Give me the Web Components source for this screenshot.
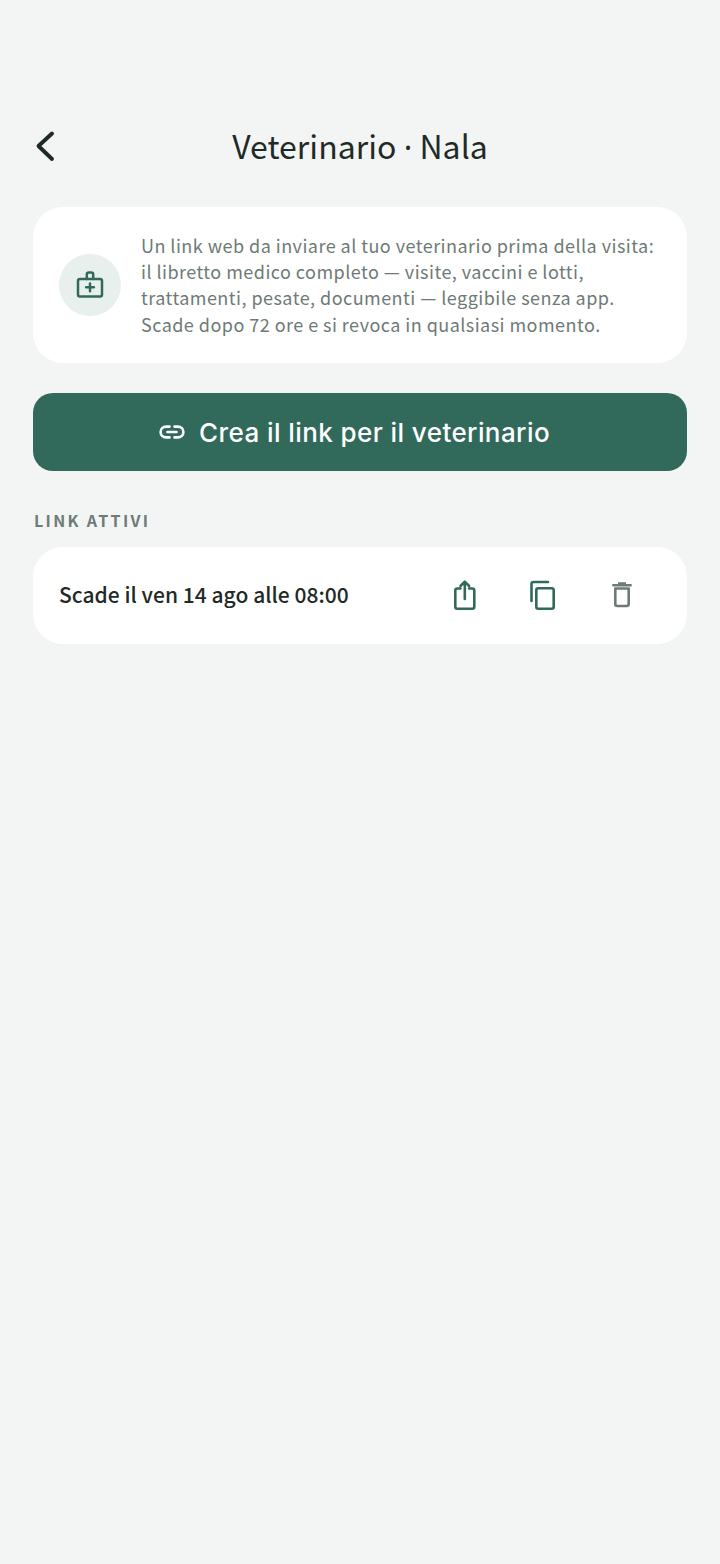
<!DOCTYPE html>
<html lang="it"><head><meta charset="utf-8"><style>
html,body{margin:0;background:#f3f5f4}
body{font-family:"Noto Sans CJK SC","Noto Sans",sans-serif;width:720px;height:1564px;overflow:hidden}
</style></head><body>
<vet-screen></vet-screen>
<script>
const def=(n,html)=>customElements.define(n,class extends HTMLElement{constructor(){super();this.attachShadow({mode:'open'}).innerHTML=html}});
def('vet-header',`<style>
:host{display:grid;grid-template-columns:1fr auto 1fr;align-items:center;height:60px;color:#1f2a27}
svg{display:block;margin-left:32px;margin-bottom:2px}
h1{margin:0;font-weight:400;font-size:32px;line-height:56px;height:60px;white-space:nowrap;letter-spacing:.03px}
.d{font-family:"Noto Sans",sans-serif}
</style><svg width="26" height="36" viewBox="0 0 26 36" fill="none" stroke="#1f2a27" stroke-width="3.900" stroke-linecap="round" stroke-linejoin="round"><path d="M20 5.500 6.500 18 20 31"/></svg><h1>Veterinario <span class="d">·</span> Nala</h1><span></span>`);
def('info-card',`<style>
:host{display:flex;align-items:center;gap:20px;background:#fff;border-radius:30px;padding:24px 26px;height:156px;box-sizing:border-box}
.c{width:62px;height:62px;border-radius:50%;background:#e7f0ed;display:flex;align-items:center;justify-content:center;flex:none}
svg{display:block}
p{margin:0;padding-bottom:1.400px;font-size:18px;line-height:26.300px;color:#6e7a76;letter-spacing:.46px;white-space:nowrap}
</style><div class="c"><svg width="30" height="30" viewBox="0 0 30 30" fill="none" stroke="#316a5a" stroke-width="2.500" stroke-linejoin="round" stroke-linecap="round"><rect x="3" y="9" width="24" height="17.400" rx="2"/><path d="M11.800 9V4.500a2 2 0 0 1 2-2h2.400a2 2 0 0 1 2 2V9M15 13.400v7.800M11.100 17.300h7.800"/></svg></div><p>Un link web da inviare al tuo veterinario prima della visita:<br>il libretto medico completo — visite, vaccini e lotti,<br>trattamenti, pesate, documenti — leggibile senza app.<br>Scade dopo 72 ore e si revoca in qualsiasi momento.</p>`);
def('primary-button',`<style>
:host{display:flex;align-items:center;justify-content:center;gap:14px;height:78px;padding-right:11px;box-sizing:border-box;background:#316a5a;border-radius:20px;color:#fff;font:500 26px/1 Inter,sans-serif;letter-spacing:.42px}
svg{display:block}
span{padding-top:1px}
</style><svg width="26" height="26" viewBox="0 0 26 26" fill="none" stroke="#fff" stroke-width="2.600" stroke-linecap="round"><path d="M10.500 7.600H7a5.400 5.400 0 0 0 0 10.800h3.500M15.500 7.600H19a5.400 5.400 0 0 1 0 10.800h-3.500M8.500 13h9"/></svg><span><slot></slot></span>`);
def('section-label',`<style>
:host{display:block;font-size:16px;font-weight:700;line-height:24px;letter-spacing:2.350px;color:#6e7a76;padding-left:1px}
</style><slot></slot>`);
def('link-row',`<style>
:host{display:flex;align-items:center;height:97px;background:#fff;border-radius:30px;padding-left:26px;color:#1f2a27}
.t{font-size:21px;font-weight:500;flex:1;white-space:nowrap;line-height:30px;letter-spacing:.03px;padding-bottom:3px}
.a{display:flex;align-items:center;margin-right:49px;gap:46px}
svg{display:block}
svg+svg+svg{margin-left:1px}
</style><span class="t"><slot></slot></span><div class="a">
<svg width="32" height="37" viewBox="0 0 32 37" fill="none" stroke="#316a5a" stroke-width="2.600" stroke-linecap="round" stroke-linejoin="round"><path d="M11.500 11.500H8.300a2 2 0 0 0-2 2v16.200a2 2 0 0 0 2 2h15a2 2 0 0 0 2-2V13.500a2 2 0 0 0-2-2h-3.200M15.800 22V4.800M11.500 9l4.300-4.300L20.100 9"/></svg>
<svg width="32" height="37" viewBox="0 0 32 37" fill="none" stroke="#316a5a" stroke-width="2.600" stroke-linecap="round" stroke-linejoin="round"><path d="M4.500 24V7a2 2 0 0 1 2-2H21"/><rect x="9.300" y="11.300" width="17.400" height="20.400" rx="2"/></svg>
<svg width="32" height="37" viewBox="0 0 32 37" fill="none" stroke="#6e7a76" stroke-width="2.600" stroke-linejoin="round"><path d="M9.300 11.500h13.400V27a2 2 0 0 1-2 2h-9.400a2 2 0 0 1-2-2z"/><path d="M6.300 8.300h19.400M12 6.500h8" stroke-linecap="butt"/></svg>
</div>`);
def('vet-screen',`<style>
:host{display:flex;flex-direction:column;padding:117px 33px 0;box-sizing:border-box;width:720px}
vet-header{margin:0 -33px 30px}
info-card{margin-bottom:30px}
section-label{margin:37px 0 15px}
</style><vet-header></vet-header><info-card></info-card><primary-button>Crea il link per il veterinario</primary-button><section-label>LINK ATTIVI</section-label><link-row>Scade il ven 14 ago alle 08:00</link-row>`);
</script></body></html>
